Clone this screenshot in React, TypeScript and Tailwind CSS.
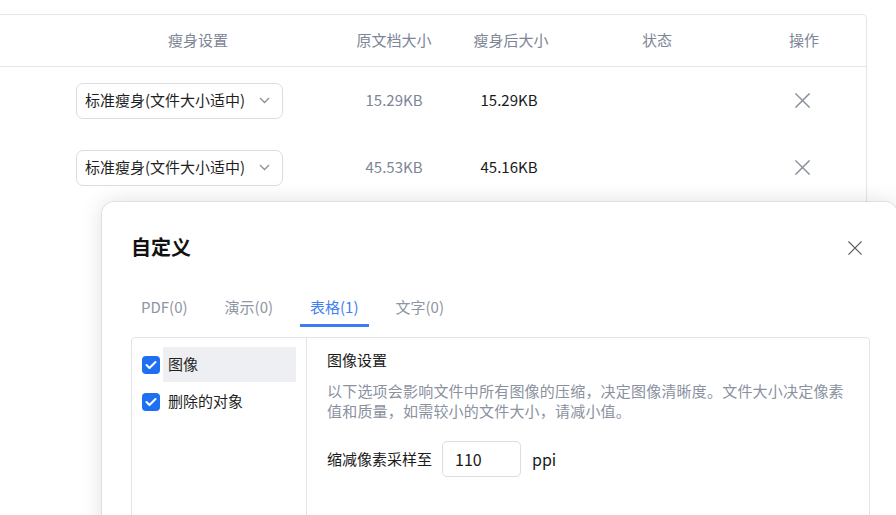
import React from "react";

const font = { fontFamily: '"Noto Sans CJK SC", "Noto Sans", sans-serif' };

function XIcon({ size = 15, color = "#8a909c", stroke = 1.6 }: { size?: number; color?: string; stroke?: number }) {
  return (
    <svg width={size} height={size} viewBox="0 0 16 16" fill="none">
      <path d="M1 1L15 15M15 1L1 15" stroke={color} strokeWidth={stroke} strokeLinecap="square" />
    </svg>
  );
}

function Chevron() {
  return (
    <svg width="11" height="7" viewBox="0 0 11 7" fill="none">
      <path d="M1 1L5.5 5.5L10 1" stroke="#8a8f99" strokeWidth="1.3" />
    </svg>
  );
}

function Check() {
  return (
    <div className="w-[18px] h-[18px] rounded-[4px] bg-[#1f6ff2] flex items-center justify-center shrink-0">
      <svg width="12" height="10" viewBox="0 0 12 10" fill="none">
        <path d="M1.5 5L4.5 8L10.5 2" stroke="white" strokeWidth="2" strokeLinecap="round" strokeLinejoin="round" />
      </svg>
    </div>
  );
}

function Row({ orig, after }: { orig: string; after: string }) {
  return (
    <div className="flex h-[67px] items-center text-[15px]">
      <div className="w-[336px] pl-[76px]">
        <div className="w-[207px] h-[36px] border border-[#dcdde3] rounded-[7px] flex items-center justify-between pl-[8px] pr-[12px] text-[#1f1f1f]">
          <span>标准瘦身(文件大小适中)</span>
          <Chevron />
        </div>
      </div>
      <div className="w-[116px] text-center text-[#7d8596]">{orig}</div>
      <div className="w-[118px] text-center pr-[4px] text-[#1a1a1a]">{after}</div>
      <div className="w-[174px]" />
      <div className="w-[120px] flex justify-center pr-[4px]">
        <XIcon />
      </div>
    </div>
  );
}

export default function App() {
  return (
    <div className="relative w-full h-[515px] overflow-hidden bg-white" style={font}>
      <div className="pt-[14px]">
        <div className="w-[867px] h-[260px] border-t border-r border-[#e4e5ea] rounded-tr-[5px]">
          <div className="flex h-[52px] items-center border-b border-[#e4e5ea] text-[15px] text-[#7d8596]">
            <div className="w-[336px] pl-[60px] text-center">瘦身设置</div>
            <div className="w-[116px] text-center">原文档大小</div>
            <div className="w-[118px] text-center">瘦身后大小</div>
            <div className="w-[174px] text-center">状态</div>
            <div className="w-[120px] text-center">操作</div>
          </div>
          <Row orig="15.29KB" after="15.29KB" />
          <Row orig="45.53KB" after="45.16KB" />
        </div>
      </div>

      <div className="absolute left-[102px] top-[202px] w-[795px] h-[400px] bg-white rounded-[12px] shadow-[0_0_0_1px_rgba(0,0,0,0.07),0_0_22px_rgba(0,0,0,0.13)] pl-[29px] pr-[27px]">
        <div className="flex items-center justify-between pt-[31px] h-[59px]">
          <div className="text-[20px] leading-[28px] font-bold text-[#111]">自定义</div>
          <div className="mr-[8px] mt-[2px]">
            <XIcon size={14} color="#555" stroke={1.3} />
          </div>
        </div>
        <div className="flex gap-[17px] mt-[35px] text-[15px] leading-[22px]">
          <div className="px-[10px] pb-[6px] border-b-[3px] border-transparent text-[#8e95a3]">PDF(0)</div>
          <div className="px-[10px] pb-[6px] border-b-[3px] border-transparent text-[#8e95a3]">演示(0)</div>
          <div className="px-[10px] pb-[6px] border-b-[3px] border-[#3c7df4] text-[#3f7ef3]">表格(1)</div>
          <div className="px-[10px] pb-[6px] border-b-[3px] border-transparent text-[#8e95a3]">文字(0)</div>
        </div>
        <div className="mt-[10px] h-[260px] border border-[#e3e4e9] rounded-[4px] flex">
          <div className="w-[175px] border-r border-[#e3e4e9] pt-[9px] pl-[10px] pr-[10px] flex flex-col gap-[2px] text-[15px] text-[#1f1f1f]">
            <div className="flex items-center gap-[3px] h-[35px]">
              <Check />
              <div className="flex-1 h-full bg-[#eeeff2] flex items-center pl-[5px]">图像</div>
            </div>
            <div className="flex items-center gap-[3px] h-[35px]">
              <Check />
              <div className="flex-1 h-full flex items-center pl-[5px]">删除的对象</div>
            </div>
          </div>
          <div className="flex-1 pl-[20px] pt-[11px] text-[15px]">
            <div className="leading-[22px] text-[#1a1a1a]">图像设置</div>
            <div className="mt-[10px] max-w-[523px] leading-[20px] tracking-[0.2px] text-[#8a919f]">
              以下选项会影响文件中所有图像的压缩，决定图像清晰度。文件大小决定像素值和质量，如需较小的文件大小，请减小值。
            </div>
            <div className="mt-[20px] flex items-center text-[#1a1a1a]">
              <span>缩减像素采样至</span>
              <div className="ml-[10px] w-[79px] h-[36px] border border-[#dcdde3] rounded-[5px] flex items-center pl-[12px] text-[16px]">
                110
              </div>
              <span className="ml-[11px] text-[16px]">ppi</span>
            </div>
          </div>
        </div>
      </div>
    </div>
  );
}
